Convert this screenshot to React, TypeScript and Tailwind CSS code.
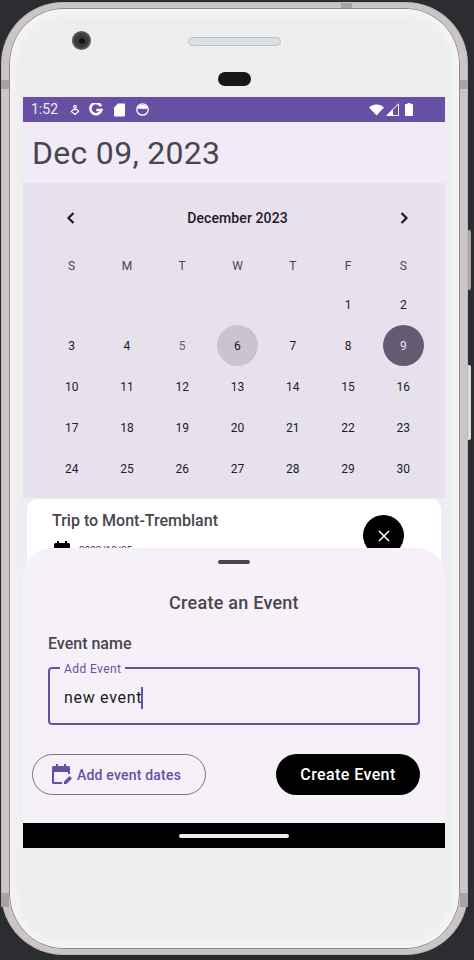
import React from 'react';

const font = "font-['Roboto',sans-serif]";

const weeks: (number | null)[][] = [
  [null, null, null, null, null, 1, 2],
  [3, 4, 5, 6, 7, 8, 9],
  [10, 11, 12, 13, 14, 15, 16],
  [17, 18, 19, 20, 21, 22, 23],
  [24, 25, 26, 27, 28, 29, 30],
];

const StatusBar = () => (
  <div className="h-[25px] bg-[#6750a4] flex items-center pl-[8px] text-white shrink-0">
    <span className="text-[14px] w-[34px] text-[#f0ecf8]">1:52</span>
    <svg className="w-[10px] h-[12px] ml-[5px]" viewBox="0 0 11 12" fill="none" stroke="white" strokeWidth="1.3">
      <circle cx="5.5" cy="2.5" r="1.5" />
      <path d="M5.5 11 1.5 7.5 3.5 5.5h4l2 2z" />
    </svg>
    <svg className="w-[14px] h-[14px] ml-[9px]" viewBox="0 0 14 14" fill="none" stroke="white" strokeWidth="2.6">
      <path d="M12 3.2A5.6 5.6 0 1 0 12.4 7H7.4" />
    </svg>
    <svg className="w-[11px] h-[14px] ml-[11px]" viewBox="0 0 11 14" fill="white">
      <path d="M4 .5h6a1 1 0 0 1 1 1v11a1 1 0 0 1-1 1H1a1 1 0 0 1-1-1V4.5z" />
    </svg>
    <svg className="w-[13px] h-[13px] ml-[11px]" viewBox="0 0 13 13">
      <circle cx="6.5" cy="6.5" r="5.7" fill="none" stroke="white" strokeWidth="1.3" />
      <path d="M1.5 5.5a5.2 5.2 0 0 1 10 0c-1 .8-1.6-.2-2.5.3s-1.5.3-2.5 0-1.5.2-2.5 0-1.5.4-2.5-.3z" fill="white" />
    </svg>
    <svg className="w-[15px] h-[12px] ml-auto" viewBox="0 0 15 12" fill="white">
      <path d="M0 3.5C2 1.5 4.6.5 7.5.5s5.5 1 7.5 3L7.5 11.5z" />
    </svg>
    <svg className="w-[13px] h-[13px] ml-[2px]" viewBox="0 0 13 13">
      <path d="M12.5.8V12.5H.8z" fill="none" stroke="white" strokeWidth="1" />
      <path d="M7 6.5V12.5H.8z" fill="white" />
    </svg>
    <svg className="w-[8px] h-[13px] ml-[6px] mr-[32px]" viewBox="0 0 8 13" fill="white">
      <path d="M2.5 0h3v1H7a1 1 0 0 1 1 1v10a1 1 0 0 1-1 1H1a1 1 0 0 1-1-1V2a1 1 0 0 1 1-1h1.5z" />
    </svg>
  </div>
);

const Calendar = () => (
  <div className="h-[315px] bg-[#e7e1ed] pl-[21px] shrink-0">
    <div className="w-[387px] h-[70px] flex items-center justify-between px-[17px] text-[#1c1b1f]">
      <svg className="w-[20px] h-[20px]" viewBox="0 0 20 20" fill="none" stroke="#1c1b1f" strokeWidth="2.2">
        <path d="M12.5 5 7.5 10l5 5" />
      </svg>
      <span className="text-[14px] font-medium tracking-[0.1px] mt-[1px]">December 2023</span>
      <svg className="w-[20px] h-[20px]" viewBox="0 0 20 20" fill="none" stroke="#1c1b1f" strokeWidth="2.2">
        <path d="M7.5 5l5 5-5 5" />
      </svg>
    </div>
    <div className="w-[387px] grid grid-cols-7 h-[24px] mt-[1px] items-center text-center text-[12px] text-[#49454f]">
      {['S', 'M', 'T', 'W', 'T', 'F', 'S'].map((d, i) => (
        <span key={i}>{d}</span>
      ))}
    </div>
    <div className="w-[387px] grid grid-cols-7 auto-rows-[41px] mt-[6px] text-[12px] text-[#1c1b1f]">
      {weeks.flat().map((d, i) => (
        <div key={i} className="flex items-center justify-center">
          {d === 6 ? (
            <span className="w-[41px] h-[41px] rounded-full bg-[#cac4d0] flex items-center justify-center">6</span>
          ) : d === 9 ? (
            <span className="w-[41px] h-[41px] rounded-full bg-[#625b71] text-[#e7e0ec] flex items-center justify-center">9</span>
          ) : (
            <span className={d === 5 ? 'text-[#625b71]' : ''}>{d}</span>
          )}
        </div>
      ))}
    </div>
  </div>
);

const EventCard = () => (
  <div className="relative h-[70px] mx-[4px] mt-[1px] bg-white rounded-t-[10px] pl-[25px] pt-[12px] overflow-hidden shrink-0">
    <div className="text-[16px] leading-[20px] font-medium text-[#49454f]">Trip to Mont-Tremblant</div>
    <div className="flex items-start gap-[7px] mt-[9px]">
      <svg className="w-[20px] h-[20px] shrink-0" viewBox="0 0 20 20" fill="black">
        <path d="M5 1h2v2h6V1h2v2h1.5A1.5 1.5 0 0 1 18 4.5V18H2V4.5A1.5 1.5 0 0 1 3.5 3H5z" />
      </svg>
      <span className="text-[10px] leading-[12px] mt-[5px] text-[#49454f]">2023/12/25</span>
    </div>
    <div className="absolute left-[336px] top-[16px] w-[41px] h-[41px] rounded-full bg-black flex items-center justify-center">
      <svg className="w-[14px] h-[14px]" viewBox="0 0 14 14" stroke="white" strokeWidth="1.5" fill="none">
        <path d="M2 2l10 10M12 2 2 12" />
      </svg>
    </div>
  </div>
);

const BottomSheet = () => (
  <div className="flex-1 -mt-[21px] relative bg-[#f6f1f9] rounded-t-[28px] flex flex-col">
    <div className="w-[32px] h-[4px] rounded-[2px] bg-[#49454f] mx-auto mt-[12px]" />
    <div className="text-center text-[18px] leading-[24px] font-medium tracking-[0.25px] text-[#49454f] mt-[27px]">Create an Event</div>
    <div className="text-[16px] leading-[20px] font-medium text-[#49454f] ml-[25px] mt-[19px]">Event name</div>
    <div className="relative ml-[25px] mr-[25px] mt-[13px] h-[58px] border-2 border-[#6750a4] rounded-[4px]">
      <span className="absolute -top-[7px] left-[10px] px-[4px] bg-[#f6f1f9] text-[12px] leading-[14px] text-[#6750a4] tracking-[0.4px]">Add Event</span>
      <div className="flex items-center h-full pl-[14px] pt-[3px]">
        <span className="text-[16px] tracking-[0.7px] text-[#1c1b1f]">new event</span>
        <span className="w-[2px] h-[22px] bg-[#6750a4] -ml-[1px]" />
      </div>
    </div>
    <div className="flex items-center justify-between mt-[29px] ml-[9px] mr-[25px]">
      <div className="w-[174px] h-[41px] border border-[#79747e] rounded-full flex items-center pl-[18px]">
        <svg className="w-[22px] h-[22px] shrink-0" viewBox="0 0 22 22" fill="#6750a4">
          <path d="M5 0h2v2h6V0h2v2h2.5A1.5 1.5 0 0 1 19 3.5V10h-2V8H3v10h8v2H2.5A1.5 1.5 0 0 1 1 18.5v-15A1.5 1.5 0 0 1 2.5 2H5z" />
          <path d="M13 20v-2.5l5.5-5.5 2.5 2.5L15.5 20z" />
        </svg>
        <span className="ml-[4px] text-[14px] font-medium tracking-[0.2px] text-[#6750a4] mt-[1px]">Add event dates</span>
      </div>
      <div className="w-[144px] h-[41px] rounded-full bg-black text-white flex items-center justify-center pt-[1px] text-[16px] font-medium tracking-[0.4px]">Create Event</div>
    </div>
  </div>
);

// device shell around the emulator screen
const DeviceChrome = () => (
  <>
    <div className="absolute left-[72px] top-[31px] w-[19px] h-[19px] rounded-full bg-[#3a3a3c] border-[2px] border-[#56565a] flex items-center justify-center">
      <span className="w-[6px] h-[6px] rounded-full bg-[#111111]" />
    </div>
    <div className="absolute left-[188px] top-[37px] w-[93px] h-[9px] rounded-full bg-[#dcdfe1] border border-[#bcc0c3]" />
    <div className="absolute left-[218px] top-[72px] w-[33px] h-[14px] rounded-full bg-[#17171a]" />
    <div className="absolute left-[341px] top-[3px] w-[11px] h-[5px] bg-[#a8a2a4]" />
    <div className="absolute left-[1px] top-[80px] w-[8px] h-[9px] bg-[#a8a2a4]" />
    <div className="absolute left-[460px] top-[80px] w-[8px] h-[9px] bg-[#a8a2a4]" />
    <div className="absolute left-[1px] top-[893px] w-[8px] h-[14px] bg-[#a8a2a4]" />
    <div className="absolute left-[460px] top-[893px] w-[8px] h-[14px] bg-[#a8a2a4]" />
    <div className="absolute left-[468px] top-[230px] w-[3px] h-[60px] rounded-r-[2px] bg-[#a9a6a8]" />
    <div className="absolute left-[468px] top-[365px] w-[3px] h-[75px] rounded-r-[2px] bg-[#dcdcdc]" />
  </>
);

export default function App() {
  return (
    <div className={`relative w-[474px] h-[960px] bg-[#2b2d30] overflow-hidden pl-[1px] pt-[2px] ${font}`}>
      <div className="w-[467px] h-[953px] rounded-[62px] bg-[#bdb6b8] p-px">
        <div className="w-full h-full rounded-[61px] border-x-[7px] border-y-[5px] border-[#cbc5c6] bg-[#ecedee] shadow-[inset_0_0_0_1px_#8f898b,inset_0_0_12px_6px_#f6f6f7] flex flex-col items-start pt-[89px]">
          <div className="w-[422px] h-[751px] ml-[14px] flex flex-col overflow-hidden shrink-0">
            <StatusBar />
            <div className="h-[61px] bg-[#f1ebf8] pl-[9px] flex items-center text-[32px] tracking-[0.3px] text-[#49454f] shrink-0">Dec 09, 2023</div>
            <Calendar />
            <div className="flex-1 flex flex-col bg-[#f1ebf8] min-h-0">
              <EventCard />
              <BottomSheet />
              <div className="h-[25px] bg-black flex items-center justify-center shrink-0">
                <span className="w-[110px] h-[4px] rounded-full bg-[#ecedee]" />
              </div>
            </div>
          </div>
        </div>
      </div>
      <DeviceChrome />
    </div>
  );
}
